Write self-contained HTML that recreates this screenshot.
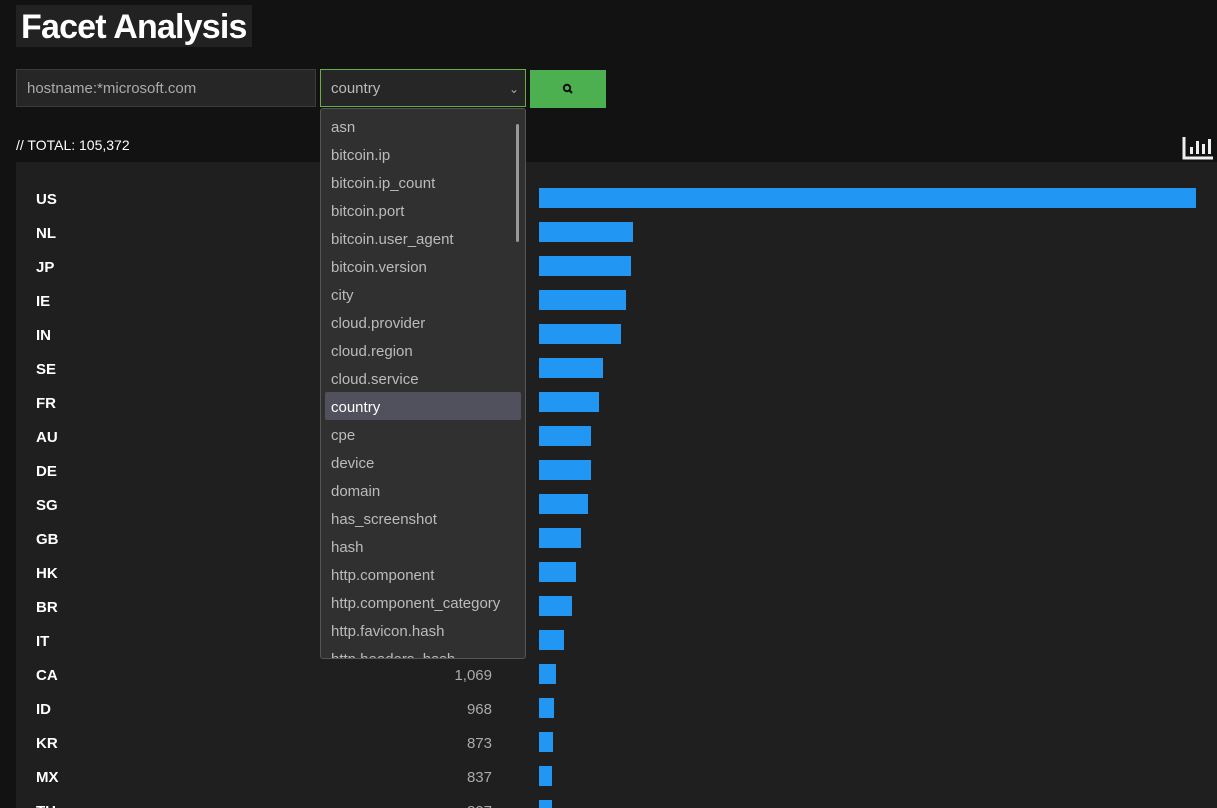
<!DOCTYPE html>
<html><head><style>
*{margin:0;padding:0;box-sizing:border-box}
html,body{width:1217px;height:808px;overflow:hidden}
body{background:#121212;font-family:"Liberation Sans",sans-serif;position:relative}
.a{position:absolute}
h1{position:absolute;left:16px;top:5px;height:42px;padding:0 5px;background:#222;color:#fff;font-size:34px;font-weight:bold;line-height:44px;letter-spacing:-0.8px}
.inp{left:16px;top:69px;width:300px;height:38px;background:#262626;border:1px solid #3a3a3a;color:#aaa;font-size:15px;line-height:38px;padding-left:10px}
.sel{left:320px;top:69px;width:206px;height:38px;background:#262626;border:1px solid #6cad3f;color:#bbb;font-size:15px;line-height:38px;padding-left:10px}
.btn{left:530px;top:70px;width:76px;height:38px;background:#4caf50}
.tot{left:16px;top:137px;color:#fff;font-size:14px}
.panel{left:16px;top:162px;width:1201px;height:646px;background:#1f1f1f}
.lab{position:absolute;left:36px;color:#fff;font-weight:bold;font-size:15px}
.num{position:absolute;right:725px;color:#aaa;font-size:15px;text-align:right}
.bar{position:absolute;left:539px;height:20px;background:#2196f3}
.dd{left:320px;top:108px;width:206px;height:551px;background:#303030;border:1px solid #555;border-radius:3px;overflow:hidden}
.it{position:absolute;left:10px;color:#bbb;font-size:15px}
</style></head><body>
<h1>Facet Analysis</h1>
<div class="a inp">hostname:*microsoft.com</div>
<div class="a sel">country<span style="position:absolute;right:6px;top:0;font-size:12px;color:#aaa">&#8964;</span></div>
<div class="a btn"><svg width="76" height="38"><circle cx="37" cy="18" r="3.2" fill="none" stroke="#111" stroke-width="2"/><line x1="39.5" y1="20.5" x2="42" y2="23" stroke="#111" stroke-width="2.2"/></svg></div>
<div class="a tot">// TOTAL: 105,372</div>
<svg class="a" style="left:1182px;top:135px" width="32" height="26"><path d="M2 2V23H31" fill="none" stroke="#eee" stroke-width="3"/><rect x="8" y="12" width="3" height="7" fill="#eee"/><rect x="14" y="6" width="3" height="13" fill="#eee"/><rect x="20" y="9" width="3" height="10" fill="#eee"/><rect x="26" y="4" width="3" height="15" fill="#eee"/></svg>
<div class="a panel"></div>
<div id="rows"></div>
<div class="a dd">
<div style="position:absolute;right:6px;top:15px;width:3px;height:118px;background:#999;border-radius:2px"></div>
<div style="position:absolute;left:4px;top:283px;width:196px;height:28px;background:#51515e;border-radius:2px"></div>
<div id="items"></div>
</div>
<script>
var d=[["US",657,"49,120"],["NL",94,"7,100"],["JP",92,"6,950"],["IE",87,"6,500"],["IN",82,"6,100"],["SE",64,"4,800"],["FR",60,"4,500"],["AU",52,"3,900"],["DE",52,"3,880"],["SG",49,"3,700"],["GB",42,"3,150"],["HK",37,"2,780"],["BR",33,"2,480"],["IT",25,"1,880"],["CA",17,"1,069"],["ID",15,"968"],["KR",14,"873"],["MX",13,"837"],["TH",13,"827"]];
var h="";d.forEach(function(r,i){var c=198+34*i;h+='<div class="lab" style="top:'+(c-7)+'px">'+r[0]+'</div><div class="num" style="top:'+(c-7)+'px">'+r[2]+'</div><div class="bar" style="top:'+(c-10)+'px;width:'+r[1]+'px"></div>';});
document.getElementById("rows").innerHTML=h;
var it=["asn","bitcoin.ip","bitcoin.ip_count","bitcoin.port","bitcoin.user_agent","bitcoin.version","city","cloud.provider","cloud.region","cloud.service","country","cpe","device","domain","has_screenshot","hash","http.component","http.component_category","http.favicon.hash","http.headers_hash"];
h="";it.forEach(function(t,i){h+='<div class="it" style="top:'+(10+28*i)+'px;'+(t=="country"?'color:#fff':'')+'">'+t+'</div>';});
document.getElementById("items").innerHTML=h;
</script>
</body></html>
